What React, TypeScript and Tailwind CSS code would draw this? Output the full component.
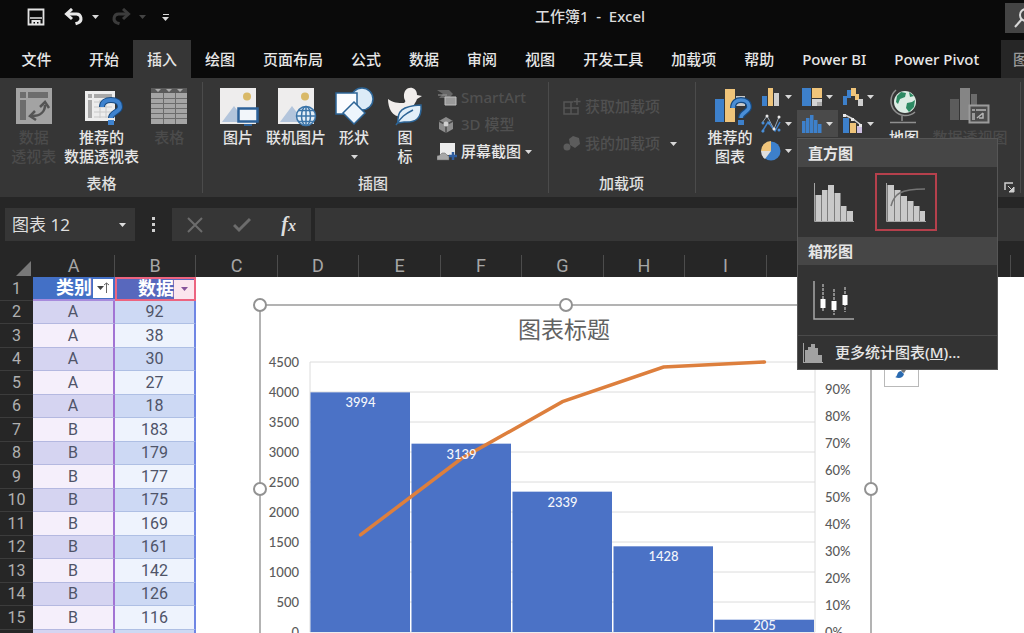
import type { ReactNode } from "react";
import clsx from "clsx";

const tabs = [
  "开始", "插入", "绘图", "页面布局", "公式", "数据", "审阅", "视图",
  "开发工具", "加载项", "帮助", "Power BI", "Power Pivot",
];

const columns = ["A", "B", "C", "D", "E", "F", "G", "H", "I", "J", "K", "L"];

const rows: [string, number][] = [
  ["A", 92], ["A", 38], ["A", 30], ["A", 27], ["A", 18],
  ["B", 183], ["B", 179], ["B", 177], ["B", 175], ["B", 169],
  ["B", 161], ["B", 142], ["B", 126], ["B", 116], ["B", 109],
];

const bars = [3994, 3139, 2339, 1428, 205];

/* ---------- icons ---------- */

const Caret = ({ className = "text-[#d8d8d8]" }: { className?: string }) => (
  <svg width="7" height="4" viewBox="0 0 7 4" className={clsx("shrink-0", className)} aria-hidden="true">
    <path d="M0 0h7L3.500 4z" fill="currentColor" />
  </svg>
);

const SaveIcon = () => (
  <svg width="18" height="18" viewBox="0 0 18 18" fill="none" aria-hidden="true">
    <path d="M1.500 1.500h15v15h-15z" stroke="#e4e4e4" strokeWidth="1.800" />
    <path d="M3 10h12" stroke="#e4e4e4" strokeWidth="1.500" />
    <path d="M4.500 12h9v5h-2v-3h-1.500v3H8v-3H6.500v3h-2z" fill="#e4e4e4" />
  </svg>
);

const UndoIcon = ({ className }: { className?: string }) => (
  <svg width="20" height="18" viewBox="0 0 20 18" fill="none" className={className} aria-hidden="true">
    <path d="M3 6h9.500a4.600 4.600 0 0 1 1.500 8.900l-2.500.8" stroke="currentColor" strokeWidth="3" />
    <path d="M8 1 2.500 6 8 11" stroke="currentColor" strokeWidth="3" />
  </svg>
);

const PivotIcon = () => (
  <svg width="36" height="36" viewBox="0 0 36 36" aria-hidden="true">
    <path d="M0 0h36v36H0z" fill="#a3a3a3" />
    <path d="M4 4h6v6H4zM12 4h20v6H12zM4 12h6v20H4z" fill="#6d6d6d" />
    <path d="M16 28c8 0 13-4 13-11" fill="none" stroke="#555" strokeWidth="2.500" />
    <path d="m24 19 5-5 4 6M19 23l-5 5 6 4" fill="none" stroke="#555" strokeWidth="2.500" />
  </svg>
);

const RecommendedPivotIcon = () => (
  <svg width="36" height="36" viewBox="0 0 36 36" className="overflow-visible" aria-hidden="true">
    <path d="M2 3h30v30H2z" fill="#ededed" />
    <path d="M5 6h4v4H5zM11 6h18v4H11zM5 12h4v18H5z" fill="#a8a8a8" />
    <path d="M11 14h18M11 19h18M11 24h18M11 29h18M17 12v18M23 12v18" stroke="#c9c9c9" />
    <path d="M19 19c0-5 4-7 9-7s9 2 9 7-9 5-9 11" fill="none" stroke="#174a80" strokeWidth="6" />
    <path d="M19 19c0-5 4-7 9-7s9 2 9 7-9 5-9 11" fill="none" stroke="#3f83cf" strokeWidth="4" />
    <path d="M25 32h6v5h-6z" fill="#3f83cf" />
  </svg>
);

const TableIcon = () => (
  <svg width="36" height="36" viewBox="0 0 36 36" aria-hidden="true">
    <path d="M0 0h36v36H0z" fill="#a5a5a5" />
    <path d="M0 0h36v5H0z" fill="#5a5a5a" />
    <path d="m4 1 3 3 3-3zM15 1l3 3 3-3zM26 1l3 3 3-3z" fill="#aaa" />
    <path d="M0 10.500h36M0 15.500h36M0 20.500h36M0 25.500h36M0 30.500h36M12.500 5v31M24.500 5v31" stroke="#6c6c6c" />
  </svg>
);

const Photo = () => (
  <>
    <path d="M0 0h36v36H0z" fill="#eeeded" />
    <path d="m2 34 12-16 12 16z" fill="#b3c5dc" />
    <circle cx="27" cy="8.500" r="4" fill="#d9b968" />
  </>
);

const PictureIcon = () => (
  <svg width="36" height="36" viewBox="0 0 36 36" className="overflow-visible" aria-hidden="true">
    <Photo />
    <path d="M18.500 20.500h19v13h-19z" fill="#f2f6fa" stroke="#2c6199" strokeWidth="2.500" />
    <path d="M24 37h8" stroke="#2c6199" strokeWidth="2" />
  </svg>
);

const OnlinePictureIcon = () => (
  <svg width="36" height="36" viewBox="0 0 36 36" className="overflow-visible" aria-hidden="true">
    <Photo />
    <g fill="none" stroke="#3b74a8" strokeWidth="1.500">
      <circle cx="28" cy="28" r="9.500" fill="#e4eef7" />
      <ellipse cx="28" cy="28" rx="4.500" ry="9.500" />
      <path d="M28 18v20M18.500 28h19M20.500 22.500h15M20.500 33.500h15" />
    </g>
  </svg>
);

const ShapesIcon = () => (
  <svg width="36" height="36" viewBox="0 0 36 36" className="overflow-visible" stroke="#2c6496" strokeWidth="1.500" aria-hidden="true">
    <circle cx="26" cy="11" r="11" fill="#dcebf7" />
    <path d="M0 5h21v21H0z" fill="#fafcff" />
    <path d="m18 14 11 11-11 11L7 25z" fill="#edf5fc" />
  </svg>
);

const DuckIcon = () => (
  <svg width="36" height="36" viewBox="0 0 36 36" className="overflow-visible" aria-hidden="true">
    <path d="M17 9c-1-12 13-12 13-2l5 1-5 3c-1 4-4 5-3 9 0 5-6 10-12 9C5 29 1 20 1 11c5 4 10 4 16 4 3-2 0-3 0-6z" fill="#f1eeec" />
    <path d="M11 35c-1-12 4-17 23-18 1 13-5 18-17 17z" fill="#e2eff9" stroke="#2c6496" strokeWidth="1.500" />
    <path d="M9 37c5-8 9-11 17-15" fill="none" stroke="#2c6496" strokeWidth="1.500" />
  </svg>
);

const SmartArtIcon = () => (
  <svg width="20" height="18" viewBox="0 0 20 18" aria-hidden="true">
    <path d="M0 1h12l4 4-4 4H2l4-4z" fill="#666" />
    <path d="M1 6h9" stroke="#999" />
    <path d="M8 8h11v8H8z" fill="#9a9a9a" stroke="#c0c0c0" />
  </svg>
);

const CubeIcon = () => (
  <svg width="20" height="18" viewBox="0 0 20 18" aria-hidden="true">
    <path d="m9 1 7 4v8l-7 4-7-4V5z" fill="#8d8d8d" />
    <path d="m2 5 7 4 7-4M9 9v8" fill="none" stroke="#4b4b4b" strokeWidth="1.500" />
    <circle cx="9" cy="8" r="2.500" fill="#d0d0d0" />
  </svg>
);

const ScreenshotIcon = () => (
  <svg width="20" height="18" viewBox="0 0 20 18" aria-hidden="true">
    <path d="M3 0h15v12H3z" fill="#ececec" />
    <path d="M0 17v-4l3-1 2-2h3l2 2 2 1v4z" fill="#a8a8a8" stroke="#666" strokeWidth=".5" />
    <path d="M16 9v8M12 13h8" stroke="#2f5d9e" strokeWidth="2.500" />
  </svg>
);

const StoreIcon = () => (
  <svg width="18" height="18" viewBox="0 0 18 18" fill="none" stroke="#565656" strokeWidth="1.500" aria-hidden="true">
    <path d="M10 4H1v12h14V9M1 10h14M8 4v12M14 0v7M10.500 3.500h7" />
  </svg>
);

const MyAddinsIcon = () => (
  <svg width="18" height="18" viewBox="0 0 18 18" fill="#5c5c5c" aria-hidden="true">
    <path d="m10 1 6 2 1 6-5 4-5-3-1-6z" />
    <circle cx="4" cy="12" r="3.500" />
  </svg>
);

const RecommendedChartIcon = () => (
  <svg width="36" height="36" viewBox="0 0 36 36" className="overflow-visible" aria-hidden="true">
    <path d="M3 11h9v23H3z" fill="#3d80cb" />
    <path d="M13 1h10v33H13z" fill="#efc47a" />
    <path d="M24 8h9v10h-9z" fill="#c9c9c9" />
    <path d="M21 20c0-6 4-8 8-8s8 2 8 7-8 5-8 11" fill="none" stroke="#174a80" strokeWidth="6" />
    <path d="M21 20c0-6 4-8 8-8s8 2 8 7-8 5-8 11" fill="none" stroke="#4a8ed6" strokeWidth="3.500" />
    <path d="M26 32h6v5h-6z" fill="#3d80cb" />
  </svg>
);

const ColumnChartIcon = () => (
  <svg width="20" height="20" viewBox="0 0 20 20" aria-hidden="true">
    <path d="M1 9h5v10H1z" fill="#3d80cb" />
    <path d="M7 1h5v18H7z" fill="#efc47a" />
    <path d="M13 6h5v13h-5z" fill="#cfcfcf" />
  </svg>
);

const LineChartIcon = () => (
  <svg width="20" height="20" viewBox="0 0 20 20" fill="none" aria-hidden="true">
    <path d="m1 18 6-10 7 9 5-9" stroke="#3d80cb" strokeWidth="1.500" />
    <path d="m1 9 5-7 7 13 5-12" stroke="#9aa8b5" />
    <g fill="#e8e8e8">
      <circle cx="6" cy="2" r="1.500" /><circle cx="18" cy="3" r="1.500" /><circle cx="13" cy="15" r="1.500" />
    </g>
    <g fill="#4a8ed6">
      <circle cx="2" cy="9" r="1.500" /><circle cx="2" cy="17" r="1.500" /><circle cx="18" cy="16" r="1.500" /><circle cx="8" cy="9" r="1.500" />
    </g>
  </svg>
);

const PieChartIcon = () => (
  <svg width="20" height="20" viewBox="0 0 20 20" aria-hidden="true">
    <circle cx="10" cy="10" r="9.500" fill="#3d80cb" />
    <path d="M10 10V0A10 10 0 0 0 0 10z" fill="#efc47a" />
    <path d="M10 10H0a10 10 0 0 0 4 8z" fill="#dedede" />
  </svg>
);

const TreemapIcon = () => (
  <svg width="20" height="20" viewBox="0 0 20 20" aria-hidden="true">
    <path d="M0 1h9v18H0z" fill="#3d80cb" />
    <path d="M10 1h10v10H10z" fill="#efc47a" />
    <path d="M10 12h10v7H10z" fill="#d4d4d4" />
    <path d="M15 15h5v4h-5z" fill="#aaa" />
  </svg>
);

const WaterfallIcon = () => (
  <svg width="20" height="20" viewBox="0 0 20 20" aria-hidden="true">
    <path d="M0 9h4v9H0zM4 3h4v8H4z" fill="#3d80cb" />
    <path d="M8 1h5v8H8zM12 7h4v6h-4z" fill="#efc47a" />
    <path d="M15 12h5v7h-5z" fill="#cfcfcf" />
  </svg>
);

const StatisticIcon = () => (
  <svg width="20" height="20" viewBox="0 0 20 20" fill="#3d80cb" aria-hidden="true">
    <path d="M0 7h3.500v12H0zM4 4h3.500v15H4zM8 1h3.500v18H8zM12 6h3.500v13H12zM16 10h3.500v9H16z" />
  </svg>
);

const ComboIcon = () => (
  <svg width="20" height="20" viewBox="0 0 20 20" aria-hidden="true">
    <path d="M0 4h6v15H0z" fill="#3d80cb" />
    <path d="M7 9h6v10H7z" fill="#efc47a" />
    <path d="M14 12h5v7h-5z" fill="#cdbfe0" />
    <path d="m2 1 8 4 8 6" fill="none" stroke="#d8d8d8" strokeWidth="1.500" />
    <path d="M0 0h3v3H0zM8 4h3v3H8zM16 10h3v3h-3z" fill="#e8e8e8" />
  </svg>
);

const GlobeIcon = () => (
  <svg width="36" height="36" viewBox="0 0 36 36" fill="none" aria-hidden="true">
    <path d="M10 2A14 14 0 1 0 29 24" stroke="#8f8f8f" strokeWidth="1.500" />
    <circle cx="19" cy="14" r="11" fill="#dcece4" />
    <path d="m11 8 4-4 5 1-1 4-5 2-2 5-2-2zM21 15l5-1 3-2-1 7-5 5-3-4zM23 4l5 4-4 1z" fill="#2d8a63" />
    <path d="M16 28v5M4 34.500h26" stroke="#8f8f8f" strokeWidth="1.500" />
  </svg>
);

const PivotChartIcon = () => (
  <svg width="40" height="36" viewBox="0 0 40 36" aria-hidden="true">
    <path d="M0 11h9v21H0z" fill="#5c5c5c" />
    <path d="M10 0h10v32H10z" fill="#858585" />
    <path d="M21 6h6v12h-6z" fill="#6b6b6b" />
    <path d="M19.500 17.500h19v17h-19z" fill="#4c4c4c" stroke="#9b9b9b" strokeWidth="2" />
    <path d="M22 21h3v2h-3zM26 21h10v2H26zM22 25h3v7h-3z" fill="#9b9b9b" />
    <path d="m27 30 6-5M33 25v5h-4" fill="none" stroke="#b5b5b5" strokeWidth="1.500" />
  </svg>
);

const HistogramIcon = () => (
  <svg width="40" height="40" viewBox="0 0 40 40" aria-hidden="true">
    <path d="M1.500 13h6v26h-6zM8 8h5.500v31H8zM14 3h6v36h-6zM20.500 11h6v28h-6zM27 24h5.500v15H27zM33 29h6v10h-6z" fill="#c9c9c9" />
    <path d="M.5 1v38.500H40" fill="none" stroke="#a5a5a5" />
  </svg>
);

const ParetoIcon = () => (
  <svg width="40" height="40" viewBox="0 0 40 40" aria-hidden="true">
    <path d="M1.500 3H8v36H1.500zM8.500 8h6v31h-6zM15 14h6v25h-6zM21.500 19h6v20h-6zM28 24h5.500v15H28zM34 29h5v10h-5z" fill="#c9c9c9" />
    <path d="M.5 1v38.500H40" fill="none" stroke="#a5a5a5" />
    <path d="M5 24c3-12 9-17 34-17" fill="none" stroke="#757575" strokeWidth="1.500" />
  </svg>
);

const BoxPlotIcon = () => (
  <svg width="42" height="40" viewBox="0 0 42 40" aria-hidden="true">
    <path d="M1 1v38h40" fill="none" stroke="#a8a8a8" strokeWidth="1.500" />
    <path d="M10 4v27M21 9v26M32 7v25" stroke="#8a8a8a" strokeWidth="2" strokeDasharray="3 1" />
    <path d="M7.500 19h5v9h-5zM18.500 21h5v9h-5zM29.500 15h5v10h-5z" fill="#fff" />
  </svg>
);

const BrushIcon = () => (
  <svg width="20" height="18" viewBox="0 0 20 18" aria-hidden="true">
    <path d="m9 10 7-9 2 2-6 9z" fill="#777" />
    <path d="M3 16c3 0 1-5 6-6l3 3c-1 4-5 5-9 3z" fill="#2a6ab0" />
  </svg>
);

/* ---------- ribbon ---------- */

type BigButtonProps = {
  icon: ReactNode;
  lines: string[];
  className?: string;
  disabled?: boolean;
  caret?: boolean;
};

const BigButton = ({ icon, lines, className, disabled, caret }: BigButtonProps) => (
  <button
    type="button"
    disabled={disabled}
    className={clsx(
      "flex shrink-0 flex-col items-center whitespace-nowrap leading-[19px]",
      disabled ? "text-[#4b4b4b]" : "text-[#e6e6e6]",
      className,
    )}
  >
    <span className="mb-1">{icon}</span>
    {lines.map((l) => (
      <span key={l}>{l}</span>
    ))}
    {caret && <span className="pt-2"><Caret /></span>}
  </button>
);

type SmallButtonProps = { icon: ReactNode; label: string; disabled?: boolean; caret?: boolean };

const SmallButton = ({ icon, label, disabled, caret }: SmallButtonProps) => (
  <button
    type="button"
    disabled={disabled}
    className={clsx(
      "flex h-[27px] items-center gap-1 whitespace-nowrap",
      disabled ? "text-[#505050]" : "text-[#e6e6e6]",
    )}
  >
    {icon}
    {label}
    {caret && <Caret />}
  </button>
);

const RibbonGroup = ({ label, className, children }: { label: string; className?: string; children: ReactNode }) => (
  <section
    aria-label={label}
    className={clsx("relative flex shrink-0 flex-col pt-[10px] pb-1 after:absolute after:inset-y-1 after:right-0 after:w-px after:bg-[#4b4b4b]", className)}
  >
    <div className="flex flex-1 items-start">{children}</div>
    <div className="h-5 text-center leading-5">{label}</div>
  </section>
);

const ChartButton = ({ icon, label, active }: { icon: ReactNode; label: string; active?: boolean }) => (
  <button
    type="button"
    aria-label={label}
    className={clsx("flex h-[27px] w-[41px] items-center gap-1 pl-[5px]", active && "bg-[#4a4a4a]")}
  >
    {icon}
    <Caret />
  </button>
);

const StatisticMenu = () => (
  <div
    role="menu"
    className="absolute top-full left-0 z-20 mt-px w-[201px] border border-[#565656] bg-[#333] text-[#e6e6e6]"
  >
    <div className="h-7 bg-[#464646] pl-[10px] leading-7 font-bold">直方图</div>
    <div className="flex h-[70px] items-center gap-[15px] pl-[9px]">
      <button type="button" role="menuitem" aria-label="直方图" className="grid h-[58px] w-[53px] place-items-center">
        <HistogramIcon />
      </button>
      <button
        type="button"
        role="menuitem"
        aria-label="排列图"
        className="grid h-[58px] w-[62px] place-items-center border-2 border-[#b5404c]"
      >
        <ParetoIcon />
      </button>
    </div>
    <div className="h-7 bg-[#464646] pl-[10px] leading-7 font-bold">箱形图</div>
    <div className="flex h-[70px] items-center pl-[9px]">
      <button type="button" role="menuitem" aria-label="箱形图" className="grid h-[58px] w-[53px] place-items-center">
        <BoxPlotIcon />
      </button>
    </div>
    <button
      type="button"
      role="menuitem"
      className="flex h-[34px] w-full items-center gap-3 border-t border-[#4a4a4a] pl-[5px] text-left"
    >
      <svg width="20" height="20" viewBox="0 0 20 20" fill="#a2a2a2" aria-hidden="true">
        <path d="M0 0h1v19h19v1H0zM2 7h3v12H2zM5 4h3v15H5zM8 1h4v18H8zM12 5h3v14h-3zM15 12h4v7h-4z" />
      </svg>
      <span>更多统计图表(<span className="underline">M</span>)...</span>
    </button>
  </div>
);

const Ribbon = () => (
  <div className="relative z-10 flex h-[119px] bg-[#363636] text-[#e0e0e0]">
    <RibbonGroup label="表格" className="w-[203px]">
      <div className="grid w-full grid-cols-3">
        <BigButton icon={<PivotIcon />} lines={["数据", "透视表"]} disabled />
        <BigButton icon={<RecommendedPivotIcon />} lines={["推荐的", "数据透视表"]} />
        <BigButton icon={<TableIcon />} lines={["表格"]} disabled />
      </div>
    </RibbonGroup>

    <RibbonGroup label="插图" className="w-[346px] pr-3 pl-[6px]">
      <BigButton icon={<PictureIcon />} lines={["图片"]} className="w-[58px]" />
      <BigButton icon={<OnlinePictureIcon />} lines={["联机图片"]} className="w-[58px]" />
      <BigButton icon={<ShapesIcon />} lines={["形状"]} caret className="w-[58px]" />
      <BigButton icon={<DuckIcon />} lines={["图", "标"]} className="w-[44px]" />
      <div className="-mt-1 flex flex-col pl-[10px]">
        <SmallButton icon={<SmartArtIcon />} label="SmartArt" disabled />
        <SmallButton icon={<CubeIcon />} label="3D 模型" disabled />
        <SmallButton icon={<ScreenshotIcon />} label="屏幕截图" caret />
      </div>
    </RibbonGroup>

    <RibbonGroup label="加载项" className="w-[147px] pr-4 pl-[14px]">
      <div className="flex flex-col gap-[10px] pt-[5px]">
        <SmallButton icon={<StoreIcon />} label="获取加载项" disabled />
        <div className="flex items-center gap-[10px]">
          <SmallButton icon={<MyAddinsIcon />} label="我的加载项" disabled />
          <button type="button" aria-label="我的加载项选项"><Caret /></button>
        </div>
      </div>
    </RibbonGroup>

    <section aria-label="图表" className="relative flex w-[325px] shrink-0 items-start pt-[10px] pl-2 after:absolute after:inset-y-1 after:right-0 after:w-px after:bg-[#4b4b4b]">
      <BigButton icon={<RecommendedChartIcon />} lines={["推荐的", "图表"]} className="w-[52px]" />
      <div className="-mt-[5px] grid shrink-0 grid-cols-[41px_41px_41px]">
        <ChartButton icon={<ColumnChartIcon />} label="柱形图" />
        <ChartButton icon={<TreemapIcon />} label="层次结构图" />
        <ChartButton icon={<WaterfallIcon />} label="瀑布图" />
        <ChartButton icon={<LineChartIcon />} label="折线图" />
        <div className="relative">
          <ChartButton icon={<StatisticIcon />} label="统计图" active />
          <StatisticMenu />
        </div>
        <ChartButton icon={<ComboIcon />} label="组合图" />
        <ChartButton icon={<PieChartIcon />} label="饼图" />
      </div>
      <BigButton icon={<GlobeIcon />} lines={["地图"]} className="w-[50px]" />
      <BigButton icon={<PivotChartIcon />} lines={["数据透视图"]} disabled className="w-[82px]" />
      <button type="button" aria-label="图表选项" className="absolute right-[6px] bottom-1">
        <svg width="11" height="11" viewBox="0 0 11 11" fill="none" aria-hidden="true">
          <path d="M1 8V1h8" stroke="#cfcfcf" strokeWidth="1.500" />
          <path d="M10 5v5H5zM4 4l4 4" fill="#cfcfcf" stroke="#cfcfcf" />
        </svg>
      </button>
    </section>
  </div>
);

/* ---------- bars above the sheet ---------- */

const TitleBar = () => (
  <header className="flex h-10 items-start text-[#dcdcdc]">
    <div className="flex h-[34px] w-[175px] shrink-0 items-center pl-[27px]">
      <button type="button" aria-label="保存"><SaveIcon /></button>
      <button type="button" aria-label="撤消" className="ml-[19px] flex items-center gap-2">
        <UndoIcon className="text-[#e8e8e8]" />
        <Caret />
      </button>
      <button type="button" aria-label="恢复" className="ml-3 flex items-center gap-2" disabled>
        <UndoIcon className="-scale-x-100 text-[#3c3c3c]" />
        <Caret className="text-[#444]" />
      </button>
      <button type="button" aria-label="自定义快速访问工具栏" className="ml-4 flex flex-col items-center gap-0.5">
        <span className="h-px w-[6px] bg-[#d8d8d8]" />
        <Caret />
      </button>
    </div>
    <h1 className="flex-1 text-center leading-8">工作簿1&nbsp; - &nbsp;Excel</h1>
    <button type="button" aria-label="搜索" className="mt-[3px] h-[30px] w-[19px] shrink-0 overflow-hidden bg-[#444] pl-[9px]">
      <svg width="20" height="20" viewBox="0 0 20 20" fill="none" stroke="#d8d8d8" strokeWidth="2" aria-hidden="true">
        <circle cx="12" cy="7" r="6" />
        <path d="m8 11-7 8" />
      </svg>
    </button>
  </header>
);

const TabBar = () => (
  <nav className="flex h-[38px] overflow-hidden whitespace-nowrap text-[#e6e6e6]">
    <button type="button" className="w-[75px] shrink-0 pr-[2px]">文件</button>
    {tabs.map((t) => (
      <button
        key={t}
        type="button"
        className={clsx("shrink-0 px-[14px]", t === "插入" && "bg-[#363636]")}
      >
        {t}
      </button>
    ))}
    <button type="button" className="ml-auto w-[23px] shrink-0 overflow-hidden bg-[#262626] pl-3 text-left text-[#9a9a9a]">
      图
    </button>
  </nav>
);

const FormulaBar = () => (
  <div className="flex h-[58px] pt-[11px] pb-[14px] text-[#dedede]">
    <div className="ml-[5px] flex w-[130px] shrink-0 items-center bg-[#363636] pr-[9px] pl-[7px]">
      <input aria-label="名称框" defaultValue="图表 12" className="w-full min-w-0 bg-transparent text-[17px] font-normal outline-none" />
      <Caret className="text-[#dedede]" />
    </div>
    <div className="flex w-[37px] shrink-0 flex-col items-center justify-center gap-[3px]">
      <span className="size-[3px] bg-[#cfcfcf]" />
      <span className="size-[3px] bg-[#cfcfcf]" />
      <span className="size-[3px] bg-[#cfcfcf]" />
    </div>
    <div className="flex w-[139px] shrink-0 items-center justify-around bg-[#363636]">
      <button type="button" aria-label="取消">
        <svg width="16" height="16" viewBox="0 0 16 16" fill="none" stroke="#6c6c6c" strokeWidth="2" aria-hidden="true">
          <path d="m1 1 14 14M15 1 1 15" />
        </svg>
      </button>
      <button type="button" aria-label="输入">
        <svg width="18" height="16" viewBox="0 0 18 16" fill="none" stroke="#6c6c6c" strokeWidth="3" aria-hidden="true">
          <path d="m1 8 5 5L17 2" />
        </svg>
      </button>
      <button type="button" aria-label="插入函数" className="font-['Liberation_Serif',serif] text-xl leading-6 font-bold italic">
        f<span className="text-base">x</span>
      </button>
    </div>
    <input aria-label="编辑栏" className="ml-1 min-w-0 flex-1 bg-[#363636] px-2 outline-none" />
  </div>
);

/* ---------- chart ---------- */

// plot area: 505 x 270, five 101px wide bins, 4500 at the top of the axis
const PLOT = { x: 50, y: 57, w: 505, h: 270 };
const binWidth = PLOT.w / bars.length;
const yOf = (value: number) => PLOT.y + PLOT.h * (1 - value / 4500);
const total = bars.reduce((a, b) => a + b, 0);
const cumulative = bars
  .map((_, i) => {
    const share = bars.slice(0, i + 1).reduce((a, b) => a + b, 0) / total;
    return `${PLOT.x + binWidth * (i + 0.5)},${PLOT.y + PLOT.h * (1 - share)}`;
  })
  .join(" ");

const handles = [
  [0, 0], [306, 0], [611, 0],
  [0, 184], [611, 184],
  [0, 368], [306, 368], [611, 368],
];

const ParetoChart = () => (
  <svg
    width="611"
    height="368"
    viewBox="0 0 611 368"
    className="block overflow-visible font-[Lato,'Noto_Sans_CJK_SC',sans-serif]"
    role="img"
    aria-label="图表标题"
  >
    <rect width="611" height="368" fill="#fff" stroke="#b3b3b3" strokeWidth="2" />
    <text x="304" y="33" textAnchor="middle" fontSize="23" fontWeight="400" fill="#626262">图表标题</text>
    {Array.from({ length: 10 }, (_, i) => (
      <g key={i}>
        <path d={`M${PLOT.x} ${yOf(i * 500)}h${PLOT.w}`} stroke="#dcdcdc" />
        <text x="39" y={yOf(i * 500) + 5} textAnchor="end" fontSize="13" fill="#5a5a5a">{i * 500}</text>
        <text x="565" y={PLOT.y + PLOT.h - i * 27 + 5} fontSize="13" fill="#5a5a5a">{i * 10}%</text>
      </g>
    ))}
    <path d={`M${PLOT.x} ${PLOT.y}v${PLOT.h}M${PLOT.x + PLOT.w} ${PLOT.y}v${PLOT.h}`} stroke="#dcdcdc" />
    {bars.map((v, i) => (
      <rect
        key={v}
        x={PLOT.x + binWidth * i + 0.5}
        y={yOf(v)}
        width={binWidth - 1.5}
        height={yOf(0) - yOf(v)}
        fill="#4b72c6"
      />
    ))}
    <polyline points={cumulative} fill="none" stroke="#dd7f3d" strokeWidth="3.500" strokeLinecap="round" />
    {bars.map((v, i) => (
      <text
        key={v}
        x={PLOT.x + binWidth * (i + 0.5)}
        // short bars keep the label above the axis
        y={Math.min(yOf(v) + 15, yOf(0) - 2)}
        textAnchor="middle"
        fontSize="13"
        fill="#f4f6fb"
      >
        {v}
      </text>
    ))}
    {handles.map(([x, y]) => (
      <circle key={`${x}-${y}`} cx={x} cy={y} r="6" fill="#fff" stroke="#929292" strokeWidth="2" />
    ))}
  </svg>
);

/* ---------- sheet ---------- */

const FilterButton = ({ label, sorted }: { label: string; sorted?: boolean }) => (
  <button
    type="button"
    aria-label={label}
    className={clsx(
      "flex h-[19px] w-5 shrink-0 items-center justify-center",
      sorted ? "bg-white text-[#444]" : "bg-[#fbe6ee] text-[#86549a]",
    )}
  >
    <Caret className="text-inherit" />
    {sorted && (
      <svg width="5" height="12" viewBox="0 0 5 12" fill="none" stroke="#666" aria-hidden="true">
        <path d="M2.500 1v10M0 3l2.500-2L5 3" />
      </svg>
    )}
  </button>
);

const Sheet = () => (
  <main className="relative flex-1 overflow-hidden bg-white">
    <table className="w-full table-fixed border-separate border-spacing-0 text-center font-[Roboto,'Noto_Sans_CJK_SC',sans-serif] text-base font-normal text-[#4f5468]">
      <colgroup>
        <col className="w-[33px]" />
        {columns.map((c, i) => (
          <col key={c} className={i % 2 ? "w-[81px]" : "w-[82px]"} />
        ))}
        <col />
      </colgroup>
      <thead>
        <tr className="h-[22px] bg-[#262626] text-[#a6a6a6]">
          <th className="p-0">
            <svg width="15" height="15" viewBox="0 0 15 15" className="mt-1 mr-0.5 ml-auto" aria-hidden="true">
              <path d="M15 0v15H0z" fill="#787878" />
            </svg>
          </th>
          {columns.map((c) => (
            <th key={c} scope="col" className="border-r border-[#4c4c4c] p-0 text-lg leading-[22px] font-normal">{c}</th>
          ))}
          <th className="p-0" />
        </tr>
      </thead>
      <tbody>
        <tr className="h-6">
          <th scope="row" className="border-b border-[#3c3c3c] bg-[#262626] p-0 leading-none font-normal text-[#b0b0b0]">1</th>
          <td className="border-b-2 border-[#a78bdc] bg-[#4370c6] p-0 text-lg leading-none font-bold text-white">
            <div className="flex items-center justify-end gap-px pr-[2px]">
              类别<FilterButton label="筛选类别" sorted />
            </div>
          </td>
          <td className="border-2 border-[#ec6480] bg-[#5868bd] p-0 text-lg leading-none font-bold text-white">
            <div className="flex items-center justify-end">
              数据<FilterButton label="筛选数据" />
            </div>
          </td>
          <td colSpan={11} />
        </tr>
        {rows.map(([kind, value], i) => (
          <tr key={value} className="odd:h-6 even:h-[23px]">
            <th scope="row" className="border-b border-[#3c3c3c] bg-[#262626] p-0 leading-none font-normal text-[#b0b0b0]">{i + 2}</th>
            <td className={clsx("border-r-2 border-b border-r-[#a274d4] border-b-[#b4b8e0] p-0 leading-none", i % 2 ? "bg-[#f5effb]" : "bg-[#d5d4f1]")}>
              {kind}
            </td>
            <td className={clsx("border-r-2 border-b border-r-[#6f86e4] border-b-[#aebfe4] p-0 leading-none", i % 2 ? "bg-[#eef3fd]" : "bg-[#cdd9f4]")}>
              {value}
            </td>
            <td colSpan={11} />
          </tr>
        ))}
      </tbody>
    </table>

    {/* the chart object floats over the cells */}
    <div className="absolute top-[50px] left-[260px]">
      <ParetoChart />
      <button
        type="button"
        aria-label="图表样式"
        className="absolute top-[47px] left-[624px] grid size-[35px] place-items-center border border-[#b9b9b9] bg-white"
      >
        <BrushIcon />
      </button>
    </div>
  </main>
);

const App = () => (
  <div className="flex h-screen flex-col overflow-hidden bg-[#262626] font-['Noto_Sans','Noto_Sans_CJK_SC',sans-serif] text-[15px] font-medium">
    <div className="shrink-0 bg-[#0a0a0a]">
      <TitleBar />
      <TabBar />
    </div>
    <div className="shrink-0">
      <Ribbon />
      <FormulaBar />
    </div>
    <Sheet />
  </div>
);

export default App;
